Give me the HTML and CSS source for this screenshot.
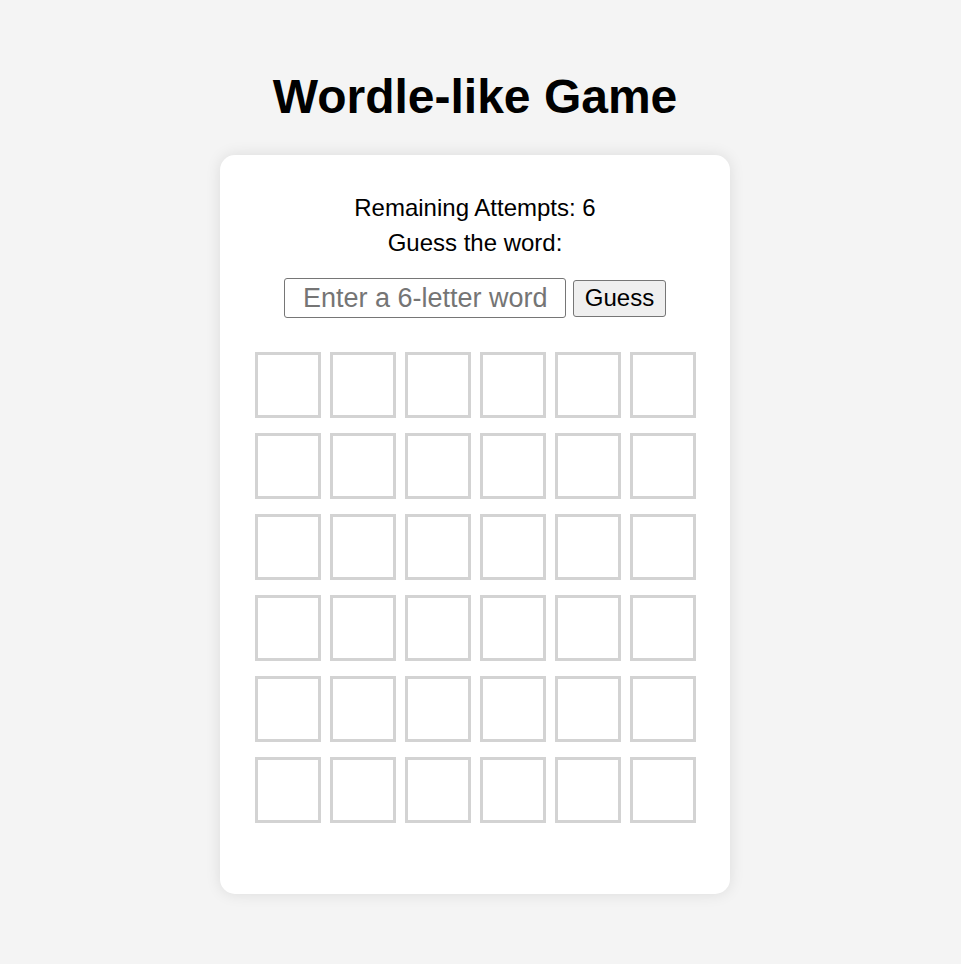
FILE: index.html
```html
<!DOCTYPE html>
<html lang="en">
<head>
<meta charset="utf-8">
<title>Wordle-like Game</title>
<link rel="stylesheet" href="styles.css">
</head>
<body>
<main class="page">
  <h1 class="title">Wordle-like Game</h1>
  <section class="card">
    <p class="line">Remaining Attempts: 6</p>
    <p class="line line-second">Guess the word:</p>
    <div class="form">
      <input class="word-input" type="text" placeholder="Enter a 6-letter word">
      <button class="guess-btn" type="button">Guess</button>
    </div>
    <div class="grid">
      <div class="cell"></div><div class="cell"></div><div class="cell"></div><div class="cell"></div><div class="cell"></div><div class="cell"></div>
      <div class="cell"></div><div class="cell"></div><div class="cell"></div><div class="cell"></div><div class="cell"></div><div class="cell"></div>
      <div class="cell"></div><div class="cell"></div><div class="cell"></div><div class="cell"></div><div class="cell"></div><div class="cell"></div>
      <div class="cell"></div><div class="cell"></div><div class="cell"></div><div class="cell"></div><div class="cell"></div><div class="cell"></div>
      <div class="cell"></div><div class="cell"></div><div class="cell"></div><div class="cell"></div><div class="cell"></div><div class="cell"></div>
      <div class="cell"></div><div class="cell"></div><div class="cell"></div><div class="cell"></div><div class="cell"></div><div class="cell"></div>
    </div>
  </section>
</main>
</body>
</html>
```
FILE: styles.css
```css
* { box-sizing: border-box; }
html, body {
  margin: 0;
  padding: 0;
  background: #f4f4f4;
  font-family: "Liberation Sans", Arial, sans-serif;
  color: #000;
}
.page {
  width: 950px;
  display: flex;
  flex-direction: column;
  align-items: center;
  padding-top: 69px;
  min-height: 964px;
}
.title {
  margin: 0;
  font-size: 48px;
  line-height: 55px;
  font-weight: bold;
}
.card {
  margin-top: 31px;
  width: 510px;
  height: 739px;
  background: #fff;
  border-radius: 15px;
  box-shadow: 0 0 15px rgba(0, 0, 0, 0.1);
  padding-top: 39px;
  display: flex;
  flex-direction: column;
  align-items: center;
}
.line {
  margin: 0;
  font-size: 24px;
  line-height: 28px;
}
.line-second {
  margin-top: 7px;
}
.form {
  margin-top: 21px;
  display: flex;
  align-items: center;
  gap: 7px;
}
.word-input {
  width: 282px;
  height: 40px;
  padding: 3px 18px;
  font-family: "Liberation Sans", Arial, sans-serif;
  font-size: 27px;
  border: 1px solid #767676;
  border-radius: 3px;
  color: #000;
}
.word-input::placeholder { color: #757575; }
.guess-btn {
  width: 93px;
  height: 37px;
  padding: 0;
  font-family: "Liberation Sans", Arial, sans-serif;
  font-size: 24px;
  background: #efefef;
  border: 1px solid #767676;
  border-radius: 3px;
  color: #000;
}
.grid {
  margin-top: 34px;
  display: grid;
  grid-template-columns: repeat(6, 66px);
  grid-auto-rows: 66px;
  column-gap: 9px;
  row-gap: 15px;
}
.cell {
  border: 3px solid #d3d3d3;
  background: #fff;
}
```
